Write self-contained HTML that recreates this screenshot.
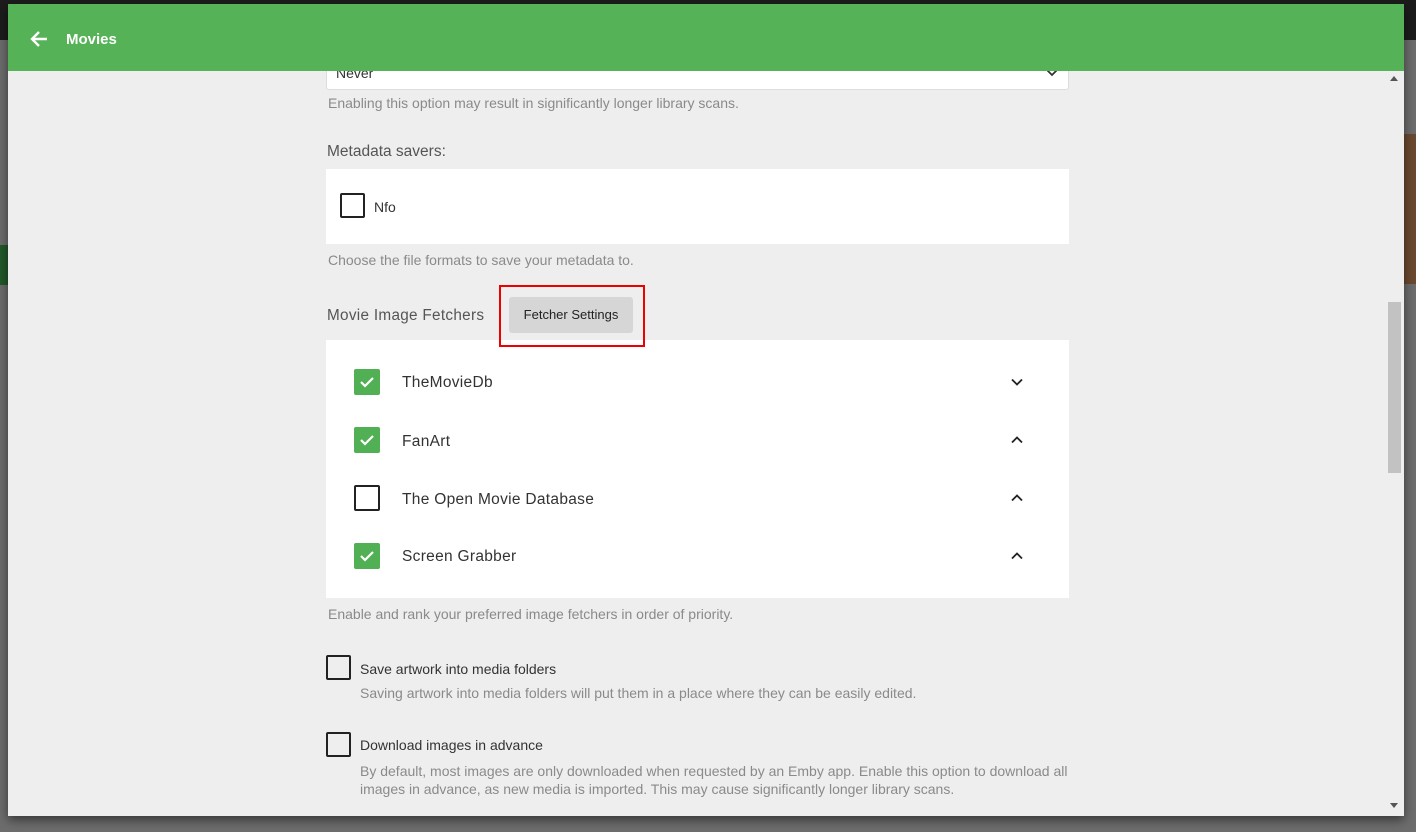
<!DOCTYPE html>
<html><head><style>
*{margin:0;padding:0;box-sizing:border-box}
body{width:1416px;height:832px;overflow:hidden;background:#6d6d6d;font-family:"Liberation Sans",sans-serif;position:relative}
.a{position:absolute}
.t{position:absolute;white-space:nowrap}
.help{font-size:14px;color:#8a8a8a}
.cb{position:absolute;width:25px;height:25px;border:2px solid #222;border-radius:2px;background:transparent}
.cg{position:absolute;width:26px;height:26px;background:#52b054;border-radius:2px}
.lab{font-size:15.5px;color:#333;letter-spacing:.3px}
</style></head><body>
<div class="a" style="left:0;top:0;width:1416px;height:40px;background:#1c1c1c"></div>
<div class="a" style="left:0;top:245px;width:8px;height:40px;background:#225a2a"></div>
<div class="a" style="left:1404px;top:134px;width:12px;height:150px;background:#6a4a30"></div>
<div class="a" style="left:8px;top:4px;width:1396px;height:812px;background:#eeeeee;box-shadow:0 4px 10px rgba(0,0,0,.5)"></div>
<div class="a" style="left:326px;top:60px;width:743px;height:30px;background:#fff;border:1px solid #ddd;border-radius:0 0 3px 3px;overflow:hidden"><div class="t" style="left:9px;top:4px;font-size:14px;color:#333">Never</div></div>
<svg class="a" style="left:1046px;top:69px" width="12" height="8" viewBox="0 0 12 8"><path d="M1 1l5 5 5-5" stroke="#333" stroke-width="1.8" fill="none"/></svg>
<div class="a" style="left:8px;top:4px;width:1396px;height:67px;background:#55b257"></div>
<svg class="a" style="left:29px;top:30px" width="20" height="18" viewBox="0 0 20 18"><path d="M18 9H3M10 2L3 9l7 7" stroke="#fff" stroke-width="2.4" fill="none"/></svg>
<div class="t" style="left:66px;top:31px;font-size:15px;font-weight:bold;color:#fff">Movies</div>

<div class="t help" style="left:328px;top:95px">Enabling this option may result in significantly longer library scans.</div>

<div class="t" style="left:327px;top:143px;font-size:15.5px;color:#555">Metadata savers:</div>
<div class="a" style="left:326px;top:169px;width:743px;height:75px;background:#fff"></div>
<div class="cb" style="left:340px;top:193px"></div>
<div class="t" style="left:374px;top:199px;font-size:14px;color:#333">Nfo</div>
<div class="t help" style="left:328px;top:252px">Choose the file formats to save your metadata to.</div>

<div class="t" style="left:327px;top:307px;font-size:15.3px;color:#555;letter-spacing:.3px">Movie Image Fetchers</div>
<div class="a" style="left:509px;top:297px;width:124px;height:36px;background:#d6d6d6;border-radius:3px"></div>
<div class="t" style="left:509px;top:307px;width:124px;text-align:center;font-size:13px;color:#222">Fetcher Settings</div>

<div class="a" style="left:326px;top:340px;width:743px;height:258px;background:#fff"></div>
<div class="a" style="left:499px;top:285px;width:146px;height:62px;border:2px solid #e00"></div>
<div class="cg" style="left:354px;top:369px"></div>
<div class="cg" style="left:354px;top:427px"></div>
<div class="cb" style="left:354px;top:485px;width:26px;height:26px"></div>
<div class="cg" style="left:354px;top:543px"></div>
<svg class="a" style="left:354px;top:369px" width="26" height="26"><path d="M7 13l4 4 8-8" stroke="#fff" stroke-width="2.2" fill="none"/></svg>
<svg class="a" style="left:354px;top:427px" width="26" height="26"><path d="M7 13l4 4 8-8" stroke="#fff" stroke-width="2.2" fill="none"/></svg>
<svg class="a" style="left:354px;top:543px" width="26" height="26"><path d="M7 13l4 4 8-8" stroke="#fff" stroke-width="2.2" fill="none"/></svg>
<div class="t lab" style="left:402px;top:374px">TheMovieDb</div>
<div class="t lab" style="left:402px;top:433px">FanArt</div>
<div class="t lab" style="left:402px;top:491px">The Open Movie Database</div>
<div class="t lab" style="left:402px;top:548px">Screen Grabber</div>
<svg class="a" style="left:1011px;top:378px" width="12" height="8"><path d="M1 1.5l5 5 5-5" stroke="#222" stroke-width="1.8" fill="none"/></svg>
<svg class="a" style="left:1011px;top:436px" width="12" height="8"><path d="M1 6.5l5-5 5 5" stroke="#222" stroke-width="1.8" fill="none"/></svg>
<svg class="a" style="left:1011px;top:494px" width="12" height="8"><path d="M1 6.5l5-5 5 5" stroke="#222" stroke-width="1.8" fill="none"/></svg>
<svg class="a" style="left:1011px;top:552px" width="12" height="8"><path d="M1 6.5l5-5 5 5" stroke="#222" stroke-width="1.8" fill="none"/></svg>
<div class="t help" style="left:328px;top:606px">Enable and rank your preferred image fetchers in order of priority.</div>

<div class="cb" style="left:326px;top:655px"></div>
<div class="t" style="left:360px;top:661px;font-size:14px;color:#333">Save artwork into media folders</div>
<div class="t help" style="left:360px;top:685px">Saving artwork into media folders will put them in a place where they can be easily edited.</div>
<div class="cb" style="left:326px;top:732px"></div>
<div class="t" style="left:360px;top:737px;font-size:14px;color:#333">Download images in advance</div>
<div class="t help" style="left:360px;top:762px;line-height:18px">By default, most images are only downloaded when requested by an Emby app. Enable this option to download all<br>images in advance, as new media is imported. This may cause significantly longer library scans.</div>

<div class="a" style="left:1388px;top:302px;width:13px;height:171px;background:#c2c2c2"></div>
<svg class="a" style="left:1390px;top:76px" width="8" height="6"><path d="M0 5h8L4 0z" fill="#555"/></svg>
<svg class="a" style="left:1390px;top:803px" width="8" height="6"><path d="M0 0h8L4 5z" fill="#555"/></svg>
</body></html>
